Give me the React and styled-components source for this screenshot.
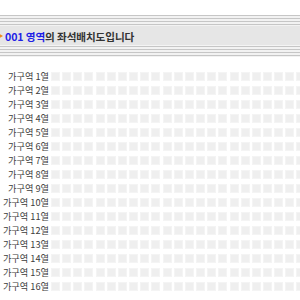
import React from "react";
import styled, { createGlobalStyle } from "styled-components";

const Global = createGlobalStyle`
  html, body { margin: 0; padding: 0; background: #fff; overflow: hidden; }
  body { font-family: "Noto Sans CJK KR", "Noto Sans", sans-serif; }
`;

const Page = styled.div`
  width: 300px;
  height: 300px;
  overflow: hidden;
  padding-top: 15px;
  box-sizing: border-box;
`;

const Header = styled.div`
  height: 42px;
  display: flex;
  flex-direction: column;
`;

const Stripes = styled.div`
  height: 11px;
  background: repeating-linear-gradient(
    to bottom,
    #c6c6c6 0px,
    #c6c6c6 1px,
    #f2f2f2 1px,
    #f2f2f2 3px
  );
`;

const Band = styled.div`
  height: 20px;
  background: #e6e6e6;
  border-bottom: 1px solid #f4f4f4;
  box-sizing: border-box;
  display: flex;
  align-items: center;
  gap: 2px;
`;

const Arrow = styled.span`
  width: 0;
  height: 0;
  border-left: 5px solid #f08a1c;
  border-top: 3.5px solid transparent;
  border-bottom: 3.5px solid transparent;
  margin-left: -2px;
`;

const Title = styled.span`
  font-size: 10.6px;
  font-weight: 700;
  color: #333;
  white-space: nowrap;
  margin-top: 1px;
  letter-spacing: -0.1px;
`;

const Blue = styled.span`
  color: #1f1fe6;
`;

const Rows = styled.div`
  margin-top: 12px;
  display: flex;
  flex-direction: column;
`;

const Row = styled.div`
  height: 14px;
  display: flex;
  align-items: center;
`;

const Label = styled.span`
  width: 50px;
  flex: none;
  padding-right: 1px;
  box-sizing: border-box;
  text-align: right;
  font-size: 9.2px;
  color: #3c3c3c;
  white-space: nowrap;
  line-height: 14px;
`;

const Seats = styled.div`
  display: flex;
  gap: 2.17px;
  margin-left: 1px;
`;

const Seat = styled.span`
  flex: none;
  width: 9px;
  height: 9px;
  background: #efefef;
  border: 1px solid #f4f4f4;
  box-sizing: border-box;
`;

export default function App() {
  const rows = Array.from({ length: 16 }, (_, i) => i + 1);
  const seats = Array.from({ length: 23 }, (_, i) => i);
  return (
    <Page>
      <Global />
      <Header>
        <Stripes />
        <Band>
          <Arrow />
          <Title>
            <Blue>001 영역</Blue>의 좌석배치도입니다
          </Title>
        </Band>
        <Stripes />
      </Header>
      <Rows>
        {rows.map((r) => (
          <Row key={r}>
            <Label>가구역 {r}열</Label>
            <Seats>
              {seats.map((s) => (
                <Seat key={s} />
              ))}
            </Seats>
          </Row>
        ))}
      </Rows>
    </Page>
  );
}
